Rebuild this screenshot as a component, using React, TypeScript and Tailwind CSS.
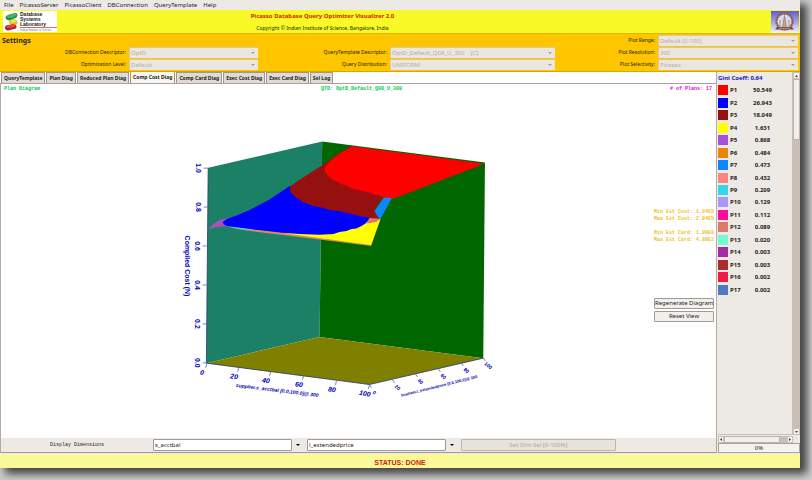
import React from 'react'

const menus = ["File", "PicassoServer", "PicassoClient", "DBConnection", "QueryTemplate", "Help"]

const tabs = ["QueryTemplate", "Plan Diag", "Reduced Plan Diag", "Comp Cost Diag", "Comp Card Diag", "Exec Cost Diag", "Exec Card Diag", "Sel Log"]

const plans = [
    { name: "P1", value: "50.549", color: "bg-[#ff0000]" },
    { name: "P2", value: "26.943", color: "bg-[#0000ff]" },
    { name: "P3", value: "18.049", color: "bg-[#961010]" },
    { name: "P4", value: "1.631", color: "bg-[#ffff00]" },
    { name: "P5", value: "0.868", color: "bg-[#a552d9]" },
    { name: "P6", value: "0.484", color: "bg-[#ec8609]" },
    { name: "P7", value: "0.473", color: "bg-[#0a86ff]" },
    { name: "P8", value: "0.432", color: "bg-[#f98585]" },
    { name: "P9", value: "0.209", color: "bg-[#33d6ea]" },
    { name: "P10", value: "0.129", color: "bg-[#a996ff]" },
    { name: "P11", value: "0.112", color: "bg-[#ff0c99]" },
    { name: "P12", value: "0.089", color: "bg-[#dc7b69]" },
    { name: "P13", value: "0.020", color: "bg-[#75f9d4]" },
    { name: "P14", value: "0.003", color: "bg-[#a52ba5]" },
    { name: "P15", value: "0.003", color: "bg-[#a82d2d]" },
    { name: "P16", value: "0.002", color: "bg-[#ef1c47]" },
    { name: "P17", value: "0.002", color: "bg-[#4f79c0]" },
]

interface SettingProps {
    id: string;
    label: string;
    value: string;
}

const Setting = ({ id, label, value }: SettingProps) => (
    <>
        <label htmlFor={id} className="pr-[3px] text-right text-[5px] leading-[11px] whitespace-nowrap">{label}</label>
        <div className="relative h-[11px]">
            <select id={id} disabled className="block h-[11px] w-full appearance-none border-t border-l border-[#d8c9a0] bg-[#ebe6df] pl-px text-[6px] leading-[10px] text-[#b5aea6] opacity-100">
                <option>{value}</option>
            </select>
            <svg viewBox="0 0 4 2" className="pointer-events-none absolute top-[5px] right-[3px] h-[2px] w-[4px]"><path d="M0 0h4L2 2z" fill="#a39b92" /></svg>
        </div>
    </>
)

const DimensionSelect = ({ id, label, value }: SettingProps) => (
    <div className="relative h-3">
        <select id={id} aria-label={label} className="block h-3 w-[90%] appearance-none rounded-[1px] border border-[#a29a92] bg-white pl-px text-[6px] leading-[10px] text-[#222]">
            <option>{value}</option>
        </select>
        <svg viewBox="0 0 4 2" className="pointer-events-none absolute top-[5px] right-[7px] h-[2px] w-[4px]"><path d="M0 0h4L2 2z" fill="#000" /></svg>
    </div>
)

const LabLogo = () => (
    <div className="flex h-[21px] w-[54px] bg-white">
        <svg viewBox="0 0 17 21" className="h-[21px] w-[17px] shrink-0">
            <path d="M2.500 6.500Q3 4.500 6 3.500L12 2q3 .3 2.500 2.500Q14 7 11 7.500l-4 2Q3 9.500 2.500 6.500z" fill="#1f9148" />
            <path d="M3.500 5.500 7 3.500l5-1.300q2 .3 1.800 1.800Q12 6 7.500 7 4.500 7 3.500 5.500z" fill="#45b56b" />
            <path d="M6 9.500 11 8q3.500 1 3.500 3.500T11 14.500L8.500 14Q5 12 6 9.500z" fill="#dcc022" />
            <path d="M7 9.700 11 8.500q2 .5 2.500 2L9.500 12Q7 11.500 7 9.700z" fill="#f1e25c" />
            <path d="M2 16.500Q2 14.500 5 14l5-.8q4 .5 3.500 3Q13 18 10 18.300l-5 1.200Q2 19 2 16.500z" fill="#b81c28" />
            <path d="M3 15.500 6 14.300l4-.6q2.500.5 2.500 1.500Q10 16.800 6 17 3.500 17 3 15.500z" fill="#e0483f" />
        </svg>
        <div className="min-w-0 flex-1 font-['Liberation_Sans',sans-serif]">
            <div className="pt-px text-[5px] leading-[5px] font-bold">
                <div>Database</div>
                <div>Systems</div>
                <div>Laboratory</div>
            </div>
            <div className="border-t border-[#d07060] font-['Liberation_Serif',serif] text-[3px] leading-[4px] whitespace-nowrap text-[#777]">Indian Institute of Science</div>
        </div>
    </div>
)

const Emblem = () => (
    <svg viewBox="0 0 28 22" className="h-[22px] w-[28px]">
        <defs>
            <linearGradient id="sky" x1="0" y1="0" x2="0" y2="1">
                <stop offset="0" stopColor="#5f5ad6" />
                <stop offset="0.6" stopColor="#b3b1ee" />
                <stop offset="1" stopColor="#f6f6fd" />
            </linearGradient>
        </defs>
        <rect width="28" height="22" fill="url(#sky)" />
        <circle cx="13.500" cy="10.500" r="8" fill="#d9d9f4" stroke="#8a5f44" strokeWidth="2.200" strokeDasharray="2.400 .4" />
        <path d="M13.500 3v3M11.500 17l1.700-11h.6l1.700 11z" stroke="#8a6a58" strokeWidth=".6" fill="#c6a68a" />
        <path d="M9 9v7M18 9v7" stroke="#8d7765" strokeWidth=".7" />
        <path d="M6 16h15l2 2.500H4z" fill="#75492f" />
        <path d="M8 17.300h11" stroke="#d6b28f" strokeWidth=".8" />
    </svg>
)

const zTicks = [
    { label: "1.0", x: 208, y: 168 },
    { label: "0.8", x: 208, y: 207 },
    { label: "0.6", x: 207, y: 246 },
    { label: "0.4", x: 207, y: 285 },
    { label: "0.2", x: 207, y: 324 },
    { label: "0.0", x: 207, y: 363 },
]

const xTicks = [
    { label: "0", x: 207, y: 364 },
    { label: "20", x: 239, y: 368 },
    { label: "40", x: 271, y: 372 },
    { label: "60", x: 304, y: 376 },
    { label: "80", x: 337, y: 381 },
    { label: "100", x: 370, y: 385 },
]

const yTicks = [
    { label: "0", x: 370, y: 385 },
    { label: "20", x: 393, y: 380 },
    { label: "40", x: 416, y: 374 },
    { label: "60", x: 439, y: 369 },
    { label: "80", x: 462, y: 363 },
    { label: "100", x: 484, y: 358 },
]

const CostPlot = () => (
    <svg viewBox="1 94 654 344" className="block h-full w-full font-['Liberation_Sans',sans-serif]">
        {/* walls and floor */}
        <path d="M208.500 167.700 322.700 141.300 320 337 206.700 363.300z" fill="#1b8066" />
        <path d="M322.700 141.300 485.700 162.300 484 358.300 320 337z" fill="#006600" />
        <path d="M206.700 363.300 320 337 484 358.300 370 384.700z" fill="#808000" />
        <path d="M208.500 167.700 206.700 363.300 370 384.700 484 358.300" fill="none" stroke="#263a6e" strokeWidth=".8" />

        {/* cost surface */}
        <path d="M208.500 229 214 224 220 220 233 217 250 210 260 222 227 226 217 227z" fill="#a552d9" />
        <path d="M208.500 229 218 226.500 228 226 225 222 216 224z" fill="#b04fa8" />
        <path d="M226 226 253 229 283 232.500 320 235 381 219 371.700 246 320 239.500 283 235 240 229.500z" fill="#dc8a5c" />
        <path d="M226 226 253 229 253 230 240 229z" fill="#33d6ea" />
        <path d="M283 232.500 320 234 334 233 347 230 357 227 367 222 381 219 371.700 245 320 238 290 234z" fill="#ffff00" />
        <path d="M223 222 227 219 238 215 250 210 270 199.500 290 186 300 190 337 209 371 217.500 366 223.500 362 226 357 228.500 352 229 347 231 340 232 334 234 320 234.700 300 234 283 232.700 253 229.300 227 226 224 224z" fill="#0000ff" />
        <path d="M290.500 186.500 300 179.500 322.700 165 340 153 352 146 385 195 375 210 381 219 370 217.700 360 216 347 212.700 337 210.700 330 210 323 207.700 313 205.700 303 201.700 295 196.500 290.500 191.500z" fill="#961010" />
        <path d="M352.500 146 485 163.500 394 198.700 384 197.500 380 195.500 375 194.500 370 192.500 362 190.700 354 189 347 185.500 342 184 337 181 332 179 328.500 175.700 325.500 172 325 168 327.500 164.500 333.500 158 339 154 345 150.500z" fill="#ff0000" />
        <path d="M384.500 197.500 392.500 198 381 219 378.500 217 375 211z" fill="#0a86ff" />
        <path d="M370 218 381 218.700 376.700 222 366.700 223.500z" fill="#dc7b69" />

        {/* axes */}
        <g fill="#0000b4" fontSize="7" fontWeight="bold">
            {zTicks.map((tick) => (
                <g key={tick.label}>
                    <path d={`M${tick.x - 4} ${tick.y}h4`} stroke="#5c5cc8" strokeWidth=".8" />
                    <text transform={`translate(${tick.x - 12} ${tick.y}) rotate(90)`} textAnchor="middle">{tick.label}</text>
                </g>
            ))}
            <text transform="translate(185 266) rotate(90)" textAnchor="middle">Compiled Cost (N)</text>
        </g>
        <g fill="#0000b4" fontSize="7" fontStyle="italic" fontWeight="bold">
            {xTicks.map((tick) => (
                <g key={tick.label}>
                    <path d={`M${tick.x} ${tick.y}l-1 4`} stroke="#5c5cc8" strokeWidth=".8" />
                    <text transform={`translate(${tick.x - 5} ${tick.y + 11}) rotate(10)`} textAnchor="middle">{tick.label}</text>
                </g>
            ))}
            <text transform="translate(236 387) rotate(7)" fontSize="5">supplier.s_acctbal [0.0,100.0]@ 300</text>
        </g>
        <g fill="#0000b4" fontSize="5" fontWeight="bold">
            {yTicks.map((tick) => (
                <g key={tick.label}>
                    <path d={`M${tick.x} ${tick.y}l2 3`} stroke="#5c5cc8" strokeWidth=".8" />
                    <text transform={`translate(${tick.x + 4} ${tick.y + 9}) rotate(40)`} textAnchor="middle">{tick.label}</text>
                </g>
            ))}
            <text transform="translate(402 397) rotate(-14)" fontSize="4">lineitem.l_extendedprice [0.0,100.0]@ 300</text>
        </g>
    </svg>
)

const Sidebar = () => (
    <aside className="flex w-[84px] shrink-0 flex-col border-l border-[#b5aba2] bg-[#edeae6] pl-px">
        <div className="flex flex-1">
            <div className="flex-1 border-r border-b border-[#c9c0b8]">
                <div className="h-3 text-[6px] leading-[13px] font-bold whitespace-nowrap text-[#1616b8]">Gini Coeff: 0.64</div>
                <table className="h-[212px] w-full text-[6px] leading-[10px] font-bold">
                    <tbody>
                        {plans.map((plan) => (
                            <tr key={plan.name}>
                                <td className="w-3 p-0"><div className={`h-[10px] w-[10px] ${plan.color}`} /></td>
                                <td className="w-[18px] p-0">{plan.name}</td>
                                <td className="p-0 pr-[15px] text-center">{plan.value}</td>
                            </tr>
                        ))}
                    </tbody>
                </table>
            </div>
            <div className="flex w-[7px] flex-col bg-[#cbbfb5]">
                <button aria-label="Scroll up" className="flex h-[7px] items-center justify-center border border-[#c9c0b8] bg-[#f6f4f2]">
                    <svg viewBox="0 0 4 2" className="h-[2px] w-[3px]"><path d="M0 2h4L2 0z" /></svg>
                </button>
                <div className="h-[61px] border border-[#bdb3aa] bg-[#f1efec]" />
                <button aria-label="Scroll down" className="mt-auto flex h-[7px] items-center justify-center border border-[#c9c0b8] bg-[#f6f4f2]">
                    <svg viewBox="0 0 4 2" className="h-[2px] w-[3px]"><path d="M0 0h4L2 2z" /></svg>
                </button>
            </div>
        </div>
        <div className="mt-px mr-[7px] flex h-[7px] bg-[#cbbfb5]">
            <button aria-label="Scroll left" className="flex w-[6px] items-center justify-center border border-[#c9c0b8] bg-[#f6f4f2]">
                <svg viewBox="0 0 2 4" className="h-[3px] w-[2px]"><path d="M2 0v4L0 2z" /></svg>
            </button>
            <div className="mr-[7px] flex-1 border border-[#bdb3aa] bg-[#f1efec]" />
            <button aria-label="Scroll right" className="flex w-[6px] items-center justify-center border border-[#c9c0b8] bg-[#f6f4f2]">
                <svg viewBox="0 0 2 4" className="h-[3px] w-[2px]"><path d="M0 0v4l2-2z" /></svg>
            </button>
        </div>
        <div role="progressbar" aria-valuenow={0} className="h-[10px] border border-[#aaa198] bg-[#f4f3ef] text-center text-[6px] leading-[8px]">0%</div>
    </aside>
)

const App = () => {
    return (
        <div className="flex min-h-screen flex-col bg-[#cdcdcd] pr-3 pb-3 font-['Noto_Sans',sans-serif] text-[#1c1c1c]">
            <div className="flex flex-1 flex-col bg-[#edeae6] shadow-[6px_5px_8px_1px_#444]">
                <nav className="flex h-[10px] gap-[6px] pl-1 text-[6px] leading-[10px]">
                    {menus.map((menu) => (
                        <button key={menu}>{menu}</button>
                    ))}
                </nav>

                <header className="flex h-6 items-center border-b border-[#d9b800] bg-[#f9f928] pr-px pl-[3px]">
                    <LabLogo />
                    <div className="flex-1 pr-[23%] text-center">
                        <h1 className="text-[6px] leading-3 font-bold text-[#d81e05]">Picasso Database Query Optimizer Visualizer 2.0</h1>
                        <p className="text-[5px] leading-3">Copyright © Indian Institute of Science, Bangalore, India</p>
                    </div>
                    <Emblem />
                </header>

                <section className="relative border-b border-[#d9a800] bg-[#ffc600] pt-px pr-[2px] pb-px">
                    <h2 className="absolute top-0 left-[2px] text-[7px] leading-[14px] font-bold">Settings</h2>
                    <div className="grid grid-cols-[129fr_129fr_132fr_165fr_103fr_140fr] gap-y-px">
                        <div className="col-span-4" />
                        <Setting id="range" label="Plot Range:" value="Default (0-100)" />
                        <Setting id="connection" label="DBConnection Descriptor:" value="OptD" />
                        <Setting id="template" label="QueryTemplate Descriptor:" value={"OptD_Default_Q08_U_300\u00a0\u00a0\u00a0\u00a0[C]"} />
                        <Setting id="resolution" label="Plot Resolution:" value="300" />
                        <Setting id="level" label="Optimization Level:" value="Default" />
                        <Setting id="distribution" label="Query Distribution:" value="UNIFORM" />
                        <Setting id="selectivity" label="Plot Selectivity:" value="Picasso" />
                    </div>
                </section>

                <div className="flex flex-1">
                    <main className="flex min-w-0 flex-1 flex-col bg-white">
                        <div role="tablist" className="flex h-3 items-end gap-px border-b border-[#aaa198] pl-px">
                            {tabs.map((tab) => (
                                <button
                                    key={tab}
                                    role="tab"
                                    aria-selected={tab === "Comp Cost Diag"}
                                    className={tab === "Comp Cost Diag"
                                        ? "h-3 border-x border-t border-[#c98a4a] bg-[#f7f5f3] px-[2px] text-[5px] leading-[11px] font-bold whitespace-nowrap"
                                        : "h-[11px] border-x border-t border-[#a0978e] bg-[#dfdad4] px-[2px] text-[5px] leading-[10px] font-bold whitespace-nowrap"}
                                >
                                    {tab}
                                </button>
                            ))}
                        </div>

                        <div className="flex flex-1 flex-col border-l border-[#b5aba2]">
                            <div className="grid h-[10px] grid-cols-[34fr_33fr_33fr] pr-1 pl-[3px] font-['Liberation_Mono',monospace] text-[5px] leading-[10px] font-bold text-[#00c84c]">
                                <span>Plan Diagram</span>
                                <span className="text-center">QTD: OptD_Default_Q08_U_300</span>
                                <span className="text-right text-[#dd00dd]"># of Plans: 17</span>
                            </div>
                            <div className="flex flex-1">
                                <div className="min-w-0 flex-1">
                                    <CostPlot />
                                </div>
                                <div className="w-[62px] shrink-0 pt-[115px] pr-[2px]">
                                    <div className="h-[89px] font-['Liberation_Mono',monospace] text-[5px] leading-[7px] font-bold whitespace-nowrap text-[#f0c020]">
                                        <div>Min Est Cost: 1.94E5</div>
                                        <div className="mb-[7px]">Max Est Cost: 2.84E5</div>
                                        <div>Min Est Card: 1.00E0</div>
                                        <div>Max Est Card: 4.80E2</div>
                                    </div>
                                    <div className="flex flex-col gap-[2px] text-[6px] leading-[9px]">
                                        <button className="h-[11px] rounded-[1px] border border-[#a29a92] bg-[#f2f0ed] whitespace-nowrap">Regenerate Diagram</button>
                                        <button className="h-[11px] rounded-[1px] border border-[#a29a92] bg-[#f2f0ed]">Reset View</button>
                                    </div>
                                </div>
                            </div>
                            <div className="grid h-[15px] grid-cols-[152fr_154fr_154fr_155fr_100fr] items-center border-b border-[#a29a92] bg-[#edeae6]">
                                <span className="text-center font-['Liberation_Mono',monospace] text-[5px] leading-3">Display Dimensions</span>
                                <DimensionSelect id="dim-x" label="First dimension" value="s_acctbal" />
                                <DimensionSelect id="dim-y" label="Second dimension" value="l_extendedprice" />
                                <button disabled className="h-3 rounded-[1px] border border-[#bdb5ac] bg-[#e6e2dc] text-[6px] leading-[10px] text-[#b0a89f]">Set Dim Sel [0-100%]</button>
                            </div>
                        </div>
                    </main>
                    <Sidebar />
                </div>

                <footer className="mt-px h-[14px] bg-[#f9f99a] pt-[3px] text-center font-['Liberation_Sans',sans-serif] text-[7px] leading-[11px] font-bold text-[#d02010]">STATUS: DONE</footer>
            </div>
        </div>
    )
}

export default App
